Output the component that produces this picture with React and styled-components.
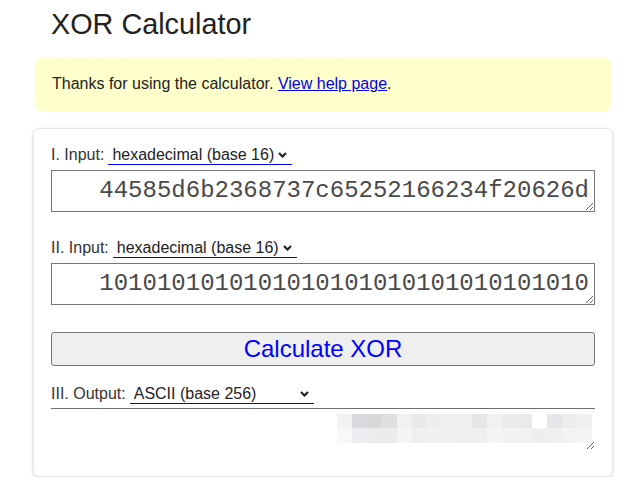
import React from "react";
import styled, { createGlobalStyle } from "styled-components";

const GlobalStyle = createGlobalStyle`
  html, body { margin: 0; padding: 0; background: #fff; }
  body { font-family: "Liberation Sans", Arial, sans-serif; color: #222; }
  * { box-sizing: border-box; }
`;

const Page = styled.div`
  width: 580px;
  margin-left: 33px;
`;

const Title = styled.h1`
  margin: 0;
  padding: 7px 0 0 18px;
  font-size: 28.8px;
  line-height: 34px;
  font-weight: normal;
  color: #222;
`;

const Notice = styled.div`
  margin: 16px 2px 0;
  padding: 17px 17px 19px;
  background: #ffffcc;
  border-radius: 8px;
  font-size: 16px;
  line-height: 19px;
  color: #222;
  a { color: #0000ee; text-decoration: underline; }
`;

const Card = styled.div`
  margin-top: 16px;
  padding: 17px 17px 26px;
  border: 1px solid #e6e6e6;
  border-radius: 6px;
  box-shadow: 0 1px 3px rgba(0, 0, 0, 0.18);
  display: flex;
  flex-direction: column;
`;

const Row = styled.div`
  display: flex;
  align-items: flex-end;
  gap: 4px;
  height: 19px;
  margin-top: ${(p) => p.$mt || 0}px;
`;

const Label = styled.span`
  font-size: 16px;
  line-height: 18px;
  margin-bottom: 1px;
  color: #333;
`;

const SelectWrap = styled.div`
  display: flex;
  align-items: center;
  width: 184px;
  height: 19px;
  padding-right: 5px;
  border-bottom: 1px solid #0000ee;
`;

const Select = styled.select`
  appearance: none;
  -webkit-appearance: none;
  flex: 1;
  min-width: 0;
  height: 18px;
  padding: 0 0 0 4px;
  border: none;
  outline: none;
  background: transparent;
  font-family: "Liberation Sans", Arial, sans-serif;
  font-size: 16px;
  line-height: 18px;
  color: #222;
`;

const Chevron = () => (
  <svg width="9" height="6" viewBox="0 0 9 6" aria-hidden="true">
    <polyline points="1,1 4.5,4.5 8,1" fill="none" stroke="#222" strokeWidth="2.2" />
  </svg>
);

const Field = styled.textarea`
  display: block;
  width: 100%;
  height: 42px;
  margin-top: 5px;
  padding: 6px 5px 6px 6px;
  border: 1px solid #767676;
  border-radius: 0;
  font-family: "Liberation Mono", "Courier New", monospace;
  font-size: 24px;
  line-height: 27px;
  text-align: right;
  color: #4a4a4a;
  white-space: nowrap;
  overflow: hidden;
  resize: both;
  outline: none;
`;

const Button = styled.button`
  display: block;
  width: 100%;
  height: 34px;
  margin-top: 27px;
  padding: 0;
  border: 1px solid #767676;
  border-radius: 3px;
  background: #efefef;
  font-family: "Liberation Sans", Arial, sans-serif;
  font-size: 24px;
  line-height: 30px;
  color: #0000ff;
  cursor: pointer;
`;

const Output = styled.div`
  display: flex;
  justify-content: flex-end;
  align-items: flex-start;
  height: 42px;
  margin-top: 4px;
  padding: 5px 3px 0 0;
  border-top: 1px solid #6e6e6e;
  resize: both;
  overflow: hidden;
`;

const mosaicTop = [
  "#f2f2f2", "#dcdae0", "#d9d8d8", "#e0dee0", "#f1f1f1", "#e8eaea", "#eeeeee", "#efefef", "#f0efef",
  "#e5e7e7", "#f1f1f1", "#ebebeb", "#eaeaea", "#ffffff", "#e6e6ea", "#eceeee", "#f0f0f0",
];
const mosaicBottom = [
  "#f8f8f8", "#eeeef2", "#ececec", "#ebebeb", "#f4f4f4", "#efefef", "#f0f0f0", "#f1eff0", "#efeff0",
  "#eeeff1", "#f4f4f4", "#f2f2f2", "#f1f1f1", "#eeeeee", "#f0f0f0", "#f3f3f3", "#f5f5f5",
];

const Mosaic = () => (
  <svg width="255" height="29" viewBox="0 0 255 29" aria-hidden="true">
    {mosaicTop.map((c, i) => (
      <rect key={"t" + i} x={i * 15} y="0" width="15" height="14.5" fill={c} />
    ))}
    {mosaicBottom.map((c, i) => (
      <rect key={"b" + i} x={i * 15} y="14.5" width="15" height="14.5" fill={c} />
    ))}
  </svg>
);

const SelectField = ({ value, options }) => (
  <SelectWrap>
    <Select defaultValue={value}>
      {options.map((o) => (
        <option key={o}>{o}</option>
      ))}
    </Select>
    <Chevron />
  </SelectWrap>
);

const inputOptions = ["binary (base 2)", "octal (base 8)", "decimal (base 10)", "hexadecimal (base 16)", "ASCII (base 256)"];

export default function App() {
  return (
    <>
      <GlobalStyle />
      <Page>
        <Title>XOR Calculator</Title>
        <Notice>
          Thanks for using the calculator. <a href="#help">View help page</a>.
        </Notice>
        <Card>
          <Row>
            <Label>I. Input:</Label>
            <SelectField value="hexadecimal (base 16)" options={inputOptions} />
          </Row>
          <Field defaultValue="44585d6b2368737c65252166234f20626d" />
          <Row $mt={27}>
            <Label>II. Input:</Label>
            <SelectField value="hexadecimal (base 16)" options={inputOptions} />
          </Row>
          <Field defaultValue="1010101010101010101010101010101010" />
          <Button>Calculate XOR</Button>
          <Row $mt={19}>
            <Label>III. Output:</Label>
            <SelectField value="ASCII (base 256)" options={inputOptions} />
          </Row>
          <Output>
            <Mosaic />
          </Output>
        </Card>
      </Page>
    </>
  );
}
